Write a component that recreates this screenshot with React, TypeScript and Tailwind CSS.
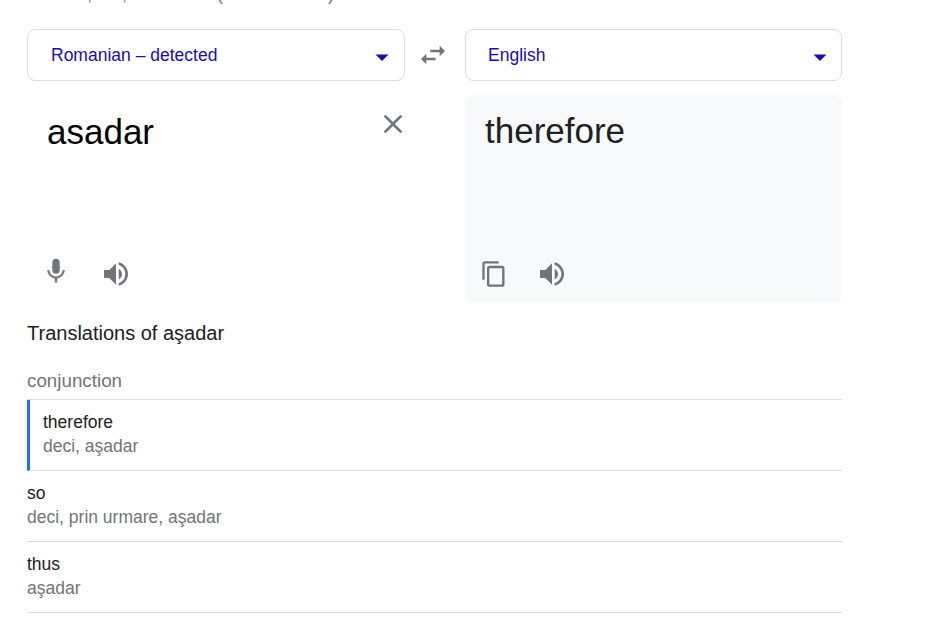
import React from "react";

const Caret = () => (
  <svg width="14" height="7" viewBox="0 0 14 7" className="block">
    <path d="M0.5 0.5h13L7 7z" fill="#1a0dab" />
  </svg>
);

const Speaker = ({ className }: { className?: string }) => (
  <svg width="32" height="32" viewBox="0 0 24 24" fill="#70757a" className={className}>
    <path d="M3 9v6h4l5 5V4L7 9H3z" />
    <path d="M16.5 12c0-1.77-1.02-3.29-2.5-4.03v8.05c1.48-.73 2.5-2.25 2.5-4.02z" />
    <path d="M14 3.23v2.06c2.89.86 5 3.54 5 6.71s-2.11 5.85-5 6.71v2.06c4.01-.91 7-4.49 7-8.77s-2.99-7.86-7-8.77z" />
  </svg>
);

const Row = ({ word, sub, active }: { word: string; sub: string; active?: boolean }) => (
  <div className={active ? "h-[71px] border-b border-[#dadce0] border-l-[3px] border-l-[#1a73e8] pl-[13px] pt-[10px]" : "h-[71px] border-b border-[#dadce0] pt-[10px]"}>
    <div className="text-[17.5px] leading-6 text-[#202124]">{word}</div>
    <div className="text-[17.5px] leading-6 text-[#70757a]">{sub}</div>
  </div>
);

export default function App() {
  return (
    <div className="w-[932px] h-[621px] overflow-hidden bg-white pl-[27px] font-['Liberation_Sans',Arial,sans-serif]">
      <div className="w-[815px]">
        <div className="h-[29px] overflow-hidden">
          <div className="flex -mt-[18px] h-6 text-[18px] leading-6 text-[#70757a]">
            <span className="ml-[60px]">,</span>
            <span className="ml-[30px]">,</span>
            <span className="ml-[90px]">(</span>
            <span className="ml-[105px]">)</span>
          </div>
        </div>
        <div className="flex items-center">
          <div className="w-[378px] h-[52px] rounded-lg border border-[#dadce0] flex items-center justify-between pl-[23px] pr-[15px]">
            <span className="text-[17.5px] text-[#1a0dab]">Romanian – detected</span>
            <span className="mt-[5px]"><Caret /></span>
          </div>
          <div className="w-[60px] flex justify-center pr-[4px]">
            <svg width="32" height="32" viewBox="0 0 24 24" fill="#70757a" className="block">
              <path d="M6.99 11 3 15l3.99 4v-3H14v-2H6.99v-3zM21 9l-3.99-4v3H10v2h7.01v3L21 9z" />
            </svg>
          </div>
          <div className="w-[377px] h-[52px] rounded-lg border border-[#dadce0] flex items-center justify-between pl-[22px] pr-[14px]">
            <span className="text-[17.5px] text-[#1a0dab]">English</span>
            <span className="mt-[5px]"><Caret /></span>
          </div>
        </div>
        <div className="flex mt-[14px]">
          <div className="w-[378px] h-[208px] flex flex-col justify-between">
            <div className="flex justify-between items-start">
              <div className="pl-[20px] pt-[15px] text-[35px] leading-[44px] text-black">asadar</div>
              <svg width="32" height="32" viewBox="0 0 24 24" fill="#70757a" className="block mt-[13px] mr-[-4px]">
                <path d="M19 6.41 17.59 5 12 10.59 6.41 5 5 6.41 10.59 12 5 17.59 6.41 19 12 13.41 17.59 19 19 17.59 13.41 12z" />
              </svg>
            </div>
            <div className="flex items-center pl-[14px] gap-[29px] pb-[13px]">
              <svg width="30" height="30" viewBox="0 0 24 24" fill="#70757a" className="block mb-[5px]">
                <path d="M12 15c1.66 0 3-1.31 3-2.97V5.98C15 4.32 13.66 3 12 3S9 4.32 9 5.98v6.05C9 13.69 10.34 15 12 15z" />
                <path d="M17.3 12c0 3-2.54 5.1-5.3 5.1S6.7 15 6.7 12H5c0 3.42 2.72 6.23 6 6.72V22h2v-3.28c3.28-.49 6-3.3 6-6.72h-1.7z" />
              </svg>
              <Speaker className="block mt-[3px]" />
            </div>
          </div>
          <div className="ml-[60px] w-[377px] h-[208px] rounded-lg bg-[#f8f9fa] flex flex-col justify-between">
            <div className="pl-[20px] pt-[14px] text-[35px] leading-[44px] text-[#202124]">therefore</div>
            <div className="flex items-center pl-[15px] gap-[28px] pb-[13px]">
              <svg width="28" height="28" viewBox="0 0 24 24" fill="#70757a" className="block">
                <path d="M16 1H4c-1.1 0-2 .9-2 2v14h2V3h12V1zm3 4H8c-1.1 0-2 .9-2 2v14c0 1.1.9 2 2 2h11c1.1 0 2-.9 2-2V7c0-1.1-.9-2-2-2zm0 16H8V7h11v14z" />
              </svg>
              <Speaker className="block" />
            </div>
          </div>
        </div>
        <div className="mt-[18px] text-[20px] leading-6 text-[#202124]">Translations of aşadar</div>
        <div className="mt-[24px] h-[30px] text-[18.8px] leading-6 text-[#70757a]">conjunction</div>
        <div className="border-b border-[#dadce0]" />
        <Row word="therefore" sub="deci, aşadar" active />
        <Row word="so" sub="deci, prin urmare, aşadar" />
        <Row word="thus" sub="aşadar" />
      </div>
    </div>
  );
}
